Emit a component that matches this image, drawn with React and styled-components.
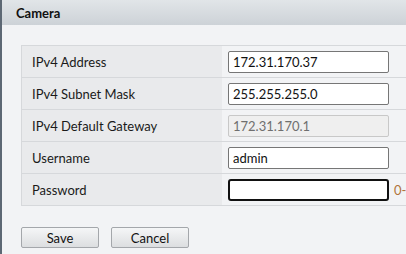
import styled, { createGlobalStyle } from "styled-components"

const GlobalStyle = createGlobalStyle`
  html, body {
    margin: 0;
    padding: 0;
    background: #f2f3f5;
    overflow: hidden;
  }
  body {
    font-family: "Lato", "Open Sans", sans-serif;
    font-size: 13px;
    color: #1a1a1a;
  }
`

const Page = styled.div`
  width: 406px;
  height: 254px;
  border-left: 2px solid #5d6874;
  box-sizing: border-box;
  background: #f2f3f5;
`

const Header = styled.div`
  height: 25px;
  display: flex;
  align-items: center;
  padding-left: 14px;
  background: linear-gradient(#e1e5e8, #cdd2d7);
  font-weight: 700;
  font-size: 13px;
  color: #111;
`

const Body = styled.div`
  padding: 20px 0 0 19px;
`

const Table = styled.div`
  width: 480px;
  border-top: 1px solid #d6d8db;
  border-left: 1px solid #d6d8db;
`

const Row = styled.div`
  display: grid;
  grid-template-columns: 200px 1fr;
  height: 31px;
  border-bottom: 1px solid #d6d8db;
`

const Label = styled.div`
  display: flex;
  align-items: center;
  padding-left: 10px;
  background: #e9eaec;
`

const Value = styled.div`
  display: flex;
  align-items: center;
  gap: 5px;
  padding-left: 6px;
  background: #f2f3f5;
`

const Input = styled.input`
  box-sizing: border-box;
  width: 161px;
  height: 22px;
  padding: 0 4px;
  font-family: "Lato", "Open Sans", sans-serif;
  font-size: 13px;
  color: #111;
  background: ${p => (p.disabled ? "#efefef" : "#fff")};
  border: ${p => (p.$focused ? "2px solid #111" : p.disabled ? "1px solid #c8c8c8" : "1px solid #767676")};
  border-radius: ${p => (p.$focused ? "3px" : "2px")};
  outline: none;
  &:disabled {
    color: #6f6f6f;
  }
`

const Hint = styled.span`
  color: #b0743a;
  white-space: nowrap;
`

const Buttons = styled.div`
  display: flex;
  gap: 12px;
  margin-top: 21px;
`

const Button = styled.button`
  width: 78px;
  height: 21px;
  padding: 0;
  font-family: "Lato", "Open Sans", sans-serif;
  font-size: 13px;
  color: #111;
  border: 1px solid #a4a7ab;
  border-radius: 2px;
  background: linear-gradient(#f5f6f7, #dcdee0);
`

const fields = [
  { label: "IPv4 Address", value: "172.31.170.37" },
  { label: "IPv4 Subnet Mask", value: "255.255.255.0" },
  { label: "IPv4 Default Gateway", value: "172.31.170.1", disabled: true },
  { label: "Username", value: "admin" },
  { label: "Password", value: "", focused: true, hint: "0-32 characters" },
]

const App = () => {
  return (
    <Page>
      <GlobalStyle />
      <Header>Camera</Header>
      <Body>
        <Table>
          {fields.map(f => (
            <Row key={f.label}>
              <Label>{f.label}</Label>
              <Value>
                <Input
                  type={f.label === "Password" ? "password" : "text"}
                  defaultValue={f.value}
                  disabled={f.disabled}
                  $focused={f.focused}
                />
                {f.hint && <Hint>{f.hint}</Hint>}
              </Value>
            </Row>
          ))}
        </Table>
        <Buttons>
          <Button>Save</Button>
          <Button>Cancel</Button>
        </Buttons>
      </Body>
    </Page>
  )
}

export default App
